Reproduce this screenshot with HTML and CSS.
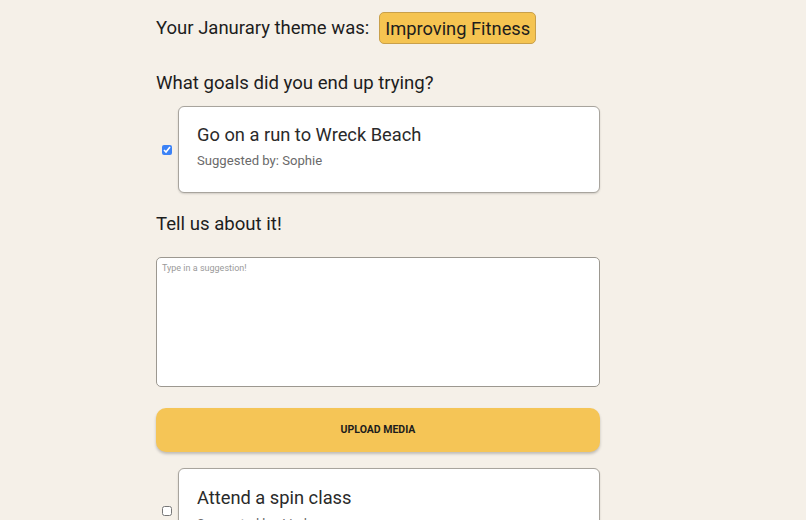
FILE: index.html
```html
<!DOCTYPE html>
<html>
<head>
<meta charset="utf-8">
<link rel="stylesheet" href="styles.css">
</head>
<body>
<div class="page">
  <div class="theme-row">
    <span class="theme-label">Your Janurary theme was:</span>
    <span class="badge">Improving Fitness</span>
  </div>
  <h2 class="question">What goals did you end up trying?</h2>
  <div class="goal">
    <input type="checkbox" class="check" checked>
    <div class="card">
      <div class="card-title">Go on a run to Wreck Beach</div>
      <div class="card-sub">Suggested by: Sophie</div>
    </div>
  </div>
  <h2 class="question tell">Tell us about it!</h2>
  <textarea class="story" placeholder="Type in a suggestion!"></textarea>
  <button class="upload">UPLOAD MEDIA</button>
  <div class="goal goal2">
    <input type="checkbox" class="check">
    <div class="card">
      <div class="card-title">Attend a spin class</div>
      <div class="card-sub">Suggested by: Linda</div>
    </div>
  </div>
</div>
</body>
</html>
```
FILE: styles.css
```css
html, body {
  margin: 0;
  padding: 0;
  background: #f5f0e8;
  height: 520px;
  overflow: hidden;
}
body {
  font-family: Roboto, "Noto Sans", sans-serif;
  color: #1d1d1d;
}
.page {
  width: 444px;
  margin-left: 156px;
  padding-top: 12px;
  display: flex;
  flex-direction: column;
}
.theme-row {
  display: flex;
  align-items: center;
  gap: 10px;
  height: 32px;
}
.theme-label {
  font-size: 18.5px;
}
.badge {
  background: #f5c451;
  border: 1px solid #c9a04a;
  border-radius: 5px;
  height: 30px;
  padding: 0 5px;
  display: flex;
  align-items: center;
  font-size: 18.3px;
}
.question {
  font-weight: normal;
  font-size: 18.6px;
  line-height: 24px;
  margin: 27px 0 0 0;
}
.goal {
  display: flex;
  align-items: center;
  margin-top: 11px;
}
.check {
  margin: 0 6px 0 6px;
  width: 10px;
  height: 10px;
  accent-color: #3b82f6;
}
.card {
  flex: 1;
  background: #ffffff;
  border: 1px solid #a8a49d;
  border-radius: 6px;
  padding: 16px 18px 0 18px;
  box-sizing: border-box;
  box-shadow: 0 1px 2px rgba(0,0,0,0.15);
  height: 87px;
}
.card-title {
  font-size: 18.3px;
  line-height: 24px;
  color: #2a2a2a;
}
.card-sub {
  font-size: 13.1px;
  line-height: 18px;
  margin-top: 5px;
  color: #6a6a6a;
}
.tell {
  margin-top: 19px;
}
.story {
  margin-top: 21px;
  width: 444px;
  height: 130px;
  box-sizing: border-box;
  border: 1px solid #9c9890;
  border-radius: 5px;
  background: #ffffff;
  resize: none;
  padding: 5px 5px;
  font-family: Roboto, sans-serif;
  font-size: 9px;
  display: block;
}
.story::placeholder {
  color: #9a9a9a;
}
.upload {
  margin-top: 21px;
  height: 44px;
  width: 444px;
  border: none;
  border-radius: 10px;
  background: #f5c556;
  box-shadow: 0 2px 3px rgba(0,0,0,0.22);
  font-family: Roboto, sans-serif;
  font-weight: bold;
  font-size: 10.5px;
  color: #1d1d1d;
  padding: 0 0 2px 0;
}
.goal2 {
  margin-top: 16px;
}
.goal2 .card {
  padding-top: 17px;
}
.goal2 .check {
  align-self: flex-start;
  margin-top: 38px;
}
```
